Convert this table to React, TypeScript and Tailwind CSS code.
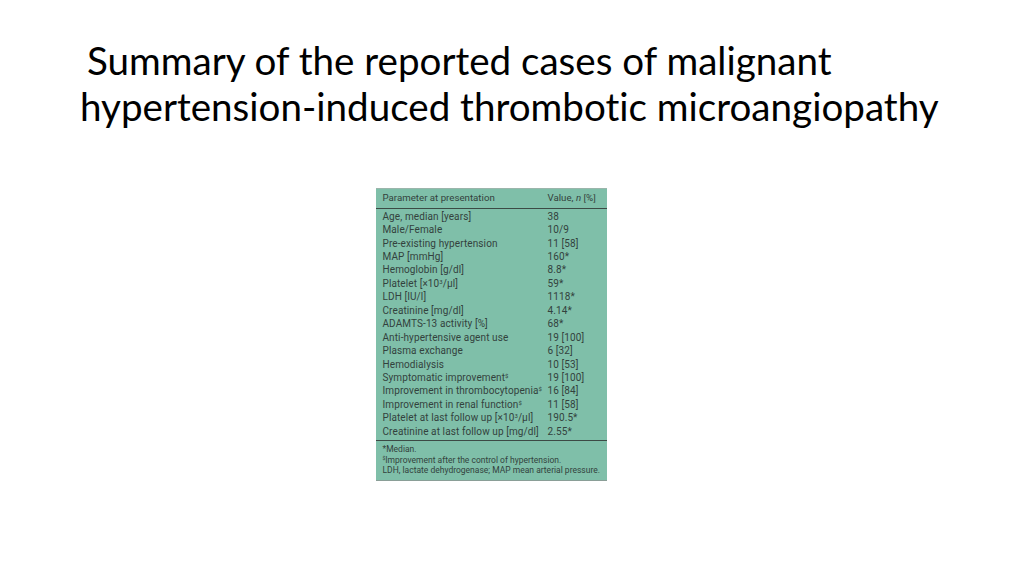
import React from "react";

const rows: [React.ReactNode, string][] = [
  ["Age, median [years]", "38"],
  ["Male/Female", "10/9"],
  ["Pre-existing hypertension", "11 [58]"],
  ["MAP [mmHg]", "160*"],
  ["Hemoglobin [g/dl]", "8.8*"],
  [<>Platelet [×10<sup className="text-[6px]">3</sup>/µl]</>, "59*"],
  ["LDH [IU/l]", "1118*"],
  ["Creatinine [mg/dl]", "4.14*"],
  ["ADAMTS-13 activity [%]", "68*"],
  ["Anti-hypertensive agent use", "19 [100]"],
  ["Plasma exchange", "6 [32]"],
  ["Hemodialysis", "10 [53]"],
  [<>Symptomatic improvement<sup className="text-[6px]">$</sup></>, "19 [100]"],
  [<>Improvement in thrombocytopenia<sup className="text-[6px]">$</sup></>, "16 [84]"],
  [<>Improvement in renal function<sup className="text-[6px]">$</sup></>, "11 [58]"],
  [<>Platelet at last follow up [×10<sup className="text-[6px]">3</sup>/µl]</>, "190.5*"],
  ["Creatinine at last follow up [mg/dl]", "2.55*"],
];

export default function App() {
  return (
    <div className="w-[1024px] h-[576px] bg-white overflow-hidden relative">
      <div
        className="pt-[37px] pl-[80px] text-[38.6px] leading-[46px] text-black [font-variant-ligatures:none]"
        style={{ fontFamily: "Lato, 'Open Sans', sans-serif" }}
      >
        <div className="pl-[7px]">Summary of the reported cases of malignant</div>
        <div>hypertension-induced thrombotic microangiopathy</div>
      </div>
      <div className="flex justify-center mt-[59px]">
        <div
          className="w-[231px] ml-[-42px] bg-[#7fbfa9] text-[#33423d] border-t border-[#9bb5ab]"
          style={{ fontFamily: "Roboto, 'Liberation Sans', sans-serif" }}
        >
          <div className="flex h-[20px] items-center px-[7px] text-[9.7px] border-b-[1.5px] border-[#3c4a45]">
            <div className="w-[165px]">Parameter at presentation</div>
            <div>
              Value, <i>n</i> [%]
            </div>
          </div>
          <div className="pt-[1px] pb-[2px] border-b-[1.5px] border-[#3c4a45]">
            {rows.map(([a, b], i) => (
              <div key={i} className="flex h-[13.45px] items-center px-[7px] text-[10px] leading-none tracking-[0.1px]">
                <div className="w-[165px] whitespace-nowrap">{a}</div>
                <div className="whitespace-nowrap">{b}</div>
              </div>
            ))}
          </div>
          <div className="px-[7px] pt-[3px] pb-[4px] text-[8.5px] leading-[10.5px] border-b border-[#8a9e97] whitespace-nowrap">
            <div>*Median.</div>
            <div>
              <sup className="text-[5px]">$</sup>Improvement after the control of hypertension.
            </div>
            <div>LDH, lactate dehydrogenase; MAP mean arterial pressure.</div>
          </div>
        </div>
      </div>
    </div>
  );
}
